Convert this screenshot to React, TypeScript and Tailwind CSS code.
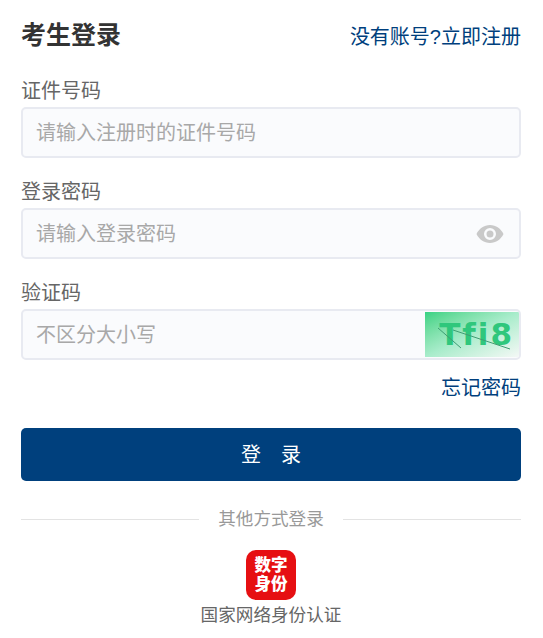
const font = { fontFamily: '"Liberation Sans", "Noto Sans CJK SC", sans-serif' };

function Field({ label, placeholder, children }: { label: string; placeholder: string; children?: React.ReactNode }) {
  return (
    <div className="flex flex-col">
      <div className="h-[31px] text-[20px] leading-[31px] text-[#666666]">{label}</div>
      <div className="flex h-[51px] items-center overflow-hidden rounded-[5px] border-2 border-[#e8eaf1] bg-[#fafbfd]">
        <span className="flex-1 pl-[13px] text-[20px] leading-[28px] text-[#a8a8a8]">{placeholder}</span>
        {children}
      </div>
    </div>
  );
}

function Eye() {
  return (
    <svg width="28" height="20" viewBox="0 0 28 20" className="mr-[15px]">
      <path
        fillRule="evenodd"
        fill="#c9c9c9"
        d="M14 1C8 1 3 4.8 0.5 10 3 15.2 8 19 14 19s11-3.8 13.500-9C25 4.800 20 1 14 1zm0 15a6 6 0 1 1 0-12 6 6 0 0 1 0 12zm0-2.500a3.500 3.500 0 1 0 0-7 3.500 3.500 0 0 0 0 7z"
      />
    </svg>
  );
}

function Captcha() {
  return (
    <div className="relative flex h-[45px] w-[94px] items-center justify-end bg-gradient-to-br from-[#35d283] via-[#a8eccb] to-[#f4f8f6] pr-[5px]">
      <span
        className="text-[31px] font-bold leading-none tracking-[2px] text-[#2fc77c]"
        style={{ fontFamily: '"DejaVu Sans", sans-serif' }}
      >
        Tfi8
      </span>
      <svg className="absolute inset-0" width="94" height="45" viewBox="0 0 94 45">
        <path d="M13 16L36 36M28 18L85 37" stroke="#3f9d73" strokeWidth="1" fill="none" />
      </svg>
    </div>
  );
}

export default function App() {
  return (
    <div className="h-[638px] w-[543px] overflow-hidden bg-white pl-[21px] pr-[22px]" style={font}>
      <div className="flex h-[76px] items-center justify-between pb-[6px]">
        <h1 className="text-[25px] font-bold leading-[32px] text-[#333333]">考生登录</h1>
        <a className="mt-[3px] text-[20px] leading-[28px] text-[#003f7d]">没有账号?立即注册</a>
      </div>
      <div className="flex flex-col gap-[19px]">
        <Field label="证件号码" placeholder="请输入注册时的证件号码" />
        <Field label="登录密码" placeholder="请输入登录密码">
          <Eye />
        </Field>
        <Field label="验证码" placeholder="不区分大小写">
          <Captcha />
        </Field>
      </div>
      <div className="mt-[14px] text-right text-[20px] leading-[28px] text-[#003f7d]">忘记密码</div>
      <button className="mt-[26px] flex h-[53px] w-full items-center justify-center gap-[20px] rounded-[5px] bg-[#00407d] text-[20px] text-white">
        <span>登</span>
        <span>录</span>
      </button>
      <div className="mt-[25px] flex h-[26px] items-center gap-[19px]">
        <div className="h-px flex-1 bg-[#e3e3e3]" />
        <span className="text-[17.6px] text-[#999999]">其他方式登录</span>
        <div className="h-px flex-1 bg-[#e3e3e3]" />
      </div>
      <div className="mt-[18px] flex flex-col items-center">
        <div className="flex h-[50px] w-[50px] items-center justify-center rounded-[10px] bg-[#e60f12]">
          <div className="w-[34px] text-center text-[16.5px] font-black leading-[19px] text-white">数字身份</div>
        </div>
        <div className="mt-[2px] text-[17.6px] leading-[26px] text-[#666666]">国家网络身份认证</div>
      </div>
    </div>
  );
}
